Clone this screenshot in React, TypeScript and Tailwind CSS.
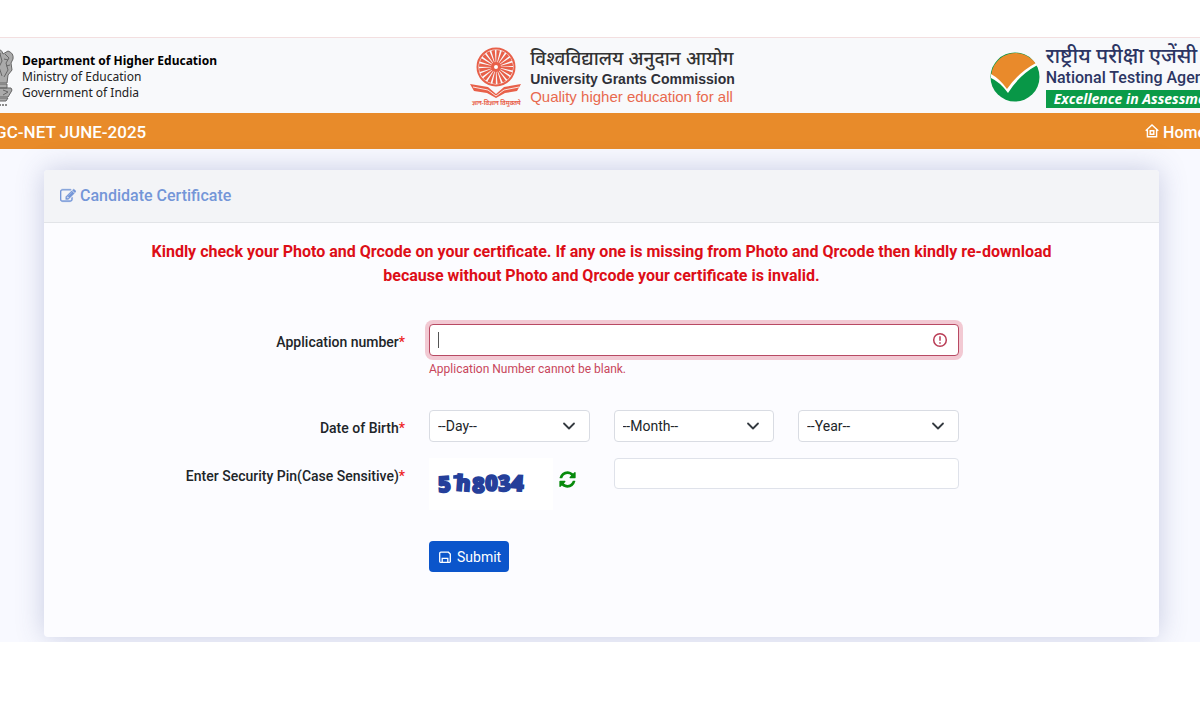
import { useState } from "react";

export default function App() {
  return (
    <div className="min-h-screen overflow-hidden bg-white pt-[37px] font-[Roboto,'Noto_Sans',sans-serif] text-[#212529]">
      <Header />
      <NavBar />
      <main className="bg-[#f8f9ff] pt-[21px] pr-[41px] pb-[5px] pl-11">
        <section className="rounded bg-[#fcfcff] shadow-[0_0_28px_rgba(60,70,140,0.25)]">
          <h1 className="flex items-center gap-1 rounded-t border-b border-[#e2e4e8] bg-[#f3f4f7] px-4 py-[14px] text-base font-medium text-[#7496d8]">
            {editIcon}
            Candidate Certificate
          </h1>
          <CertificateForm />
        </section>
      </main>
      <footer className="relative h-20 bg-white" />
    </div>
  );
}

function Header() {
  return (
    <header className="flex h-[76px] items-center justify-between border-t border-[#f3dfe0] bg-[#f8f9fb] pt-0.5 whitespace-nowrap">
      <div className="-ml-6 flex flex-1 items-center gap-2">
        {emblem}
        <div className="font-['Noto_Sans',sans-serif] text-xs leading-4 text-[#222]">
          <p className="font-bold text-black">Department of Higher Education</p>
          <p>Ministry of Education</p>
          <p>Government of India</p>
        </div>
      </div>
      <div className="flex items-center gap-[7px]">
        {ugcLogo}
        <div className="font-['Liberation_Sans','Noto_Sans',sans-serif]">
          <p className="text-[19px] leading-5 font-medium text-[#333]">
            विश्वविद्यालय अनुदान आयोग
          </p>
          <p className="text-sm leading-5 font-bold text-[#2f3038]">
            University Grants Commission
          </p>
          <p className="text-[15px] leading-4 text-[#e8694f]">
            Quality higher education for all
          </p>
        </div>
      </div>
      <div className="-mr-7 flex flex-1 items-center justify-end gap-1">
        {ntaLogo}
        <div className="text-[#2c3563]">
          <p className="text-[21px] leading-5 font-medium">राष्ट्रीय परीक्षा एजेंसी</p>
          <p className="text-base leading-6 font-medium">National Testing Agency</p>
          <p className="bg-[#0b9b48] px-2 font-['Open_Sans',sans-serif] text-sm leading-[18px] font-bold text-white italic">
            Excellence in Assessment
          </p>
        </div>
      </div>
    </header>
  );
}

function NavBar() {
  return (
    <nav className="flex h-9 items-center justify-between bg-[#e88b2a] pt-1 whitespace-nowrap text-white">
      <span className="-ml-4 text-[17px] font-medium">UGC-NET JUNE-2025</span>
      <a href="#home" className="-mr-1.5 flex items-center gap-1 text-base font-medium">
        {homeIcon}
        Home
      </a>
    </nav>
  );
}

function CertificateForm() {
  const [applicationNo, setApplicationNo] = useState("");
  const [pin, setPin] = useState("");

  return (
    <form
      className="px-4 pt-[17px] pb-[65px] text-sm"
      onSubmit={(e) => e.preventDefault()}
    >
      <p className="mx-auto max-w-[940px] text-center text-base leading-6 font-bold text-[#dd0e17]">
        Kindly check your Photo and Qrcode on your certificate. If any one is
        missing from Photo and Qrcode then kindly re-download because without
        Photo and Qrcode your certificate is invalid.
      </p>

      <div className="mt-9 grid grid-cols-6 gap-x-6">
        <label htmlFor="application" className={labelStyle}>
          Application number<Required />
        </label>
        <div className="col-span-3">
          <div className="relative">
            <input
              id="application"
              value={applicationNo}
              onChange={(e) => setApplicationNo(e.target.value)}
              aria-invalid="true"
              aria-describedby="application-error"
              className="block h-8 w-full rounded border border-[#b84a63] bg-white px-2 ring-4 ring-[#f2c9d3] outline-none"
            />
            {applicationNo === "" && (
              <span className="pointer-events-none absolute top-2 left-[9px] h-4 w-px bg-[#555]" />
            )}
            <span className="absolute top-2 right-[11px]">{alertIcon}</span>
          </div>
          <p
            id="application-error"
            className="mt-1 text-xs leading-[18px] text-[#c8465b]"
          >
            Application Number cannot be blank.
          </p>
        </div>
      </div>

      <div className="mt-8 grid grid-cols-6 gap-x-6">
        <label htmlFor="Day" className={labelStyle}>
          Date of Birth<Required />
        </label>
        {dateFields.map(({ name, options }) => (
          <div key={name} className="relative">
            <select
              id={name}
              aria-label={name}
              className="h-8 w-full appearance-none rounded border border-[#d9dce3] bg-white px-2"
            >
              <option>--{name}--</option>
              {options.map((option) => (
                <option key={option}>{option}</option>
              ))}
            </select>
            <span className="pointer-events-none absolute top-[9px] right-[14px]">
              {chevronIcon}
            </span>
          </div>
        ))}
      </div>

      <div className="mt-4 grid grid-cols-6 gap-x-6">
        <label htmlFor="pin" className={labelStyle}>
          Enter Security Pin(Case Sensitive)<Required />
        </label>
        <div className="flex items-start gap-[5px]">
          {captcha}
          <button type="button" aria-label="Refresh" className="mt-3">
            {refreshIcon}
          </button>
        </div>
        <input
          id="pin"
          value={pin}
          onChange={(e) => setPin(e.target.value)}
          className="col-span-2 h-[31px] rounded border border-[#dfe2ea] bg-white px-2"
        />
      </div>

      <div className="mt-[31px] grid grid-cols-6 gap-x-6">
        <button
          type="submit"
          className="col-start-3 flex h-[31px] items-center gap-1 justify-self-start rounded bg-[#0b55cb] px-2 text-sm text-white"
        >
          {saveIcon}
          Submit
        </button>
      </div>
    </form>
  );
}

function Required() {
  return <span className="text-[#ee1c25]">*</span>;
}

const labelStyle =
  "col-span-2 pt-2 text-right text-sm leading-5 font-medium text-[#212529]";

const dateFields = [
  {
    name: "Day",
    options: Array.from({ length: 31 }, (_, i) => String(i + 1)),
  },
  {
    name: "Month",
    options: Array.from({ length: 12 }, (_, i) => String(i + 1)),
  },
  {
    name: "Year",
    options: Array.from({ length: 60 }, (_, i) => String(2007 - i)),
  },
];

const editIcon = (
  <svg viewBox="0 0 1792 1792" className="size-4" fill="currentColor" stroke="currentColor" strokeWidth="40">
    <path d="M888 1184l116-116-152-152-116 116v56h96v96h56zm440-720q-16-16-33 1l-350 350q-17 17-1 33t33-1l350-350q17-17 1-33zm80 594v190q0 119-84.5 203.5t-203.5 84.5h-832q-119 0-203.5-84.5t-84.5-203.5v-832q0-119 84.5-203.5t203.5-84.5h832q63 0 117 25 15 7 18 23 3 17-9 29l-49 49q-14 14-32 8-23-6-45-6h-832q-66 0-113 47t-47 113v832q0 66 47 113t113 47h832q66 0 113-47t47-113v-126q0-13 9-22l64-64q15-15 35-7t20 29zm-96-738l288 288-672 672h-288v-288zm444 132l-92 92-288-288 92-92q28-28 68-28t68 28l152 152q28 28 28 68t-28 68z" />
  </svg>
);

const refreshIcon = (
  <svg viewBox="0 0 1792 1792" className="size-[19px] text-[#078a0c]" fill="currentColor">
    <path d="M1639 1056q0 5-1 7-64 268-268 434.5t-478 166.5q-146 0-282.5-55t-243.5-157l-129 129q-19 19-45 19t-45-19-19-45v-448q0-26 19-45t45-19h448q26 0 45 19t19 45-19 45l-137 137q71 66 161 102t187 36q134 0 250-65t186-179q11-17 53-117 8-23 30-23h192q13 0 22.5 9.5t9.5 22.5zm25-800v448q0 26-19 45t-45 19h-448q-26 0-45-19t-19-45 19-45l138-138q-148-137-349-137-134 0-250 65t-186 179q-11 17-53 117-8 23-30 23h-199q-13 0-22.5-9.5t-9.5-22.5v-7q65-268 270-434.5t480-166.5q146 0 284 55.5t245 156.5l130-129q19-19 45-19t45 19 19 45z" />
  </svg>
);

const homeIcon = (
  <svg viewBox="0 0 14 14" className="mb-1 size-[14px]" fill="none" stroke="currentColor" strokeWidth="1.4">
    <path d="M.7 6.8 7 1l6.3 5.8M2.4 5.8v7h9.2v-7" />
    <path d="M5.2 6.7h3.6v3.5H5.2z" />
  </svg>
);

const saveIcon = (
  <svg viewBox="0 0 16 16" className="size-4" fill="none" stroke="currentColor" strokeWidth="1.3">
    <path d="M4 3.2h7.4l1.9 1.9v7.4a.8.8 0 0 1-.8.8h-9a.8.8 0 0 1-.8-.8V4.4A1.2 1.2 0 0 1 4 3.2Z" />
    <path d="M5.2 13V9.3h5.6V13" />
  </svg>
);

const alertIcon = (
  <svg viewBox="0 0 16 16" className="size-4" fill="none" stroke="#b93c55" strokeWidth="1.5">
    <circle cx="8" cy="8" r="6.3" />
    <path d="M8 4.2v4.6M8 10.2v1.6" />
  </svg>
);

const chevronIcon = (
  <svg viewBox="0 0 14 14" className="size-[14px]" fill="none" stroke="#343a40" strokeWidth="1.8" strokeLinecap="round" strokeLinejoin="round">
    <path d="m2 4.5 5 5 5-5" />
  </svg>
);

const captcha = (
  <svg viewBox="0 0 124 52" role="img" aria-label="Security pin" className="h-[52px] w-[124px] shrink-0 bg-white">
    <g fill="#253f9a" stroke="#253f9a" strokeWidth="1.6" fontFamily="Open Sans" fontWeight="800" fontSize="22">
      <text x="9" y="34" transform="rotate(-4 16 26)">5</text>
      <text x="27" y="33" transform="rotate(4 33 25)">h</text>
      <text x="43" y="35">8</text>
      <text x="56" y="33">0</text>
      <text x="69" y="33" transform="rotate(-4 75 26)">3</text>
      <text x="82" y="33" transform="rotate(4 88 26)">4</text>
      <path d="m25 18 6-1v3h-6Z" />
    </g>
  </svg>
);

const emblem = (
  <svg viewBox="0 0 38 60" className="h-[60px] w-[38px] shrink-0" fill="#aaa" stroke="#666" strokeWidth="1">
    <path d="M12 8q0-6 7-7 7 1 8 6l5-3q6 2 5 8l-2 4 1 7-4 5-1 8H9L4 24V11l5-5Z" />
    <path d="m17 8 3 4-2 7 3 8M24 7l2 7-3 6 3 9M29 7l4 4-3 5 2 7-4 7M28 12l4 1M20 5l5 2M30 19l4-1M13 12l-2 7 3 10" fill="none" />
    <path d="M9 37h22v4H9ZM4 41h31q2 2 0 4l-3 5H6l-4-5Z" />
    <circle cx="19" cy="46" r="4" fill="#ddd" />
    <path d="M19 42v8M15 46h8M27 43l5 2-5 3M12 51h20l-2 3H9Z" />
    <path d="M8 58h24" strokeDasharray="2 1" strokeWidth="1.5" />
  </svg>
);

const ugcLogo = (
  <svg viewBox="0 0 54 62" className="h-[62px] w-[54px] shrink-0" fill="none" stroke="#e86049">
    <circle cx="27" cy="21" r="18.5" strokeWidth="2" />
    <circle cx="27" cy="21" r="10.5" strokeWidth="13" strokeDasharray="2.2 1.1" />
    <circle cx="27" cy="21" r="3.5" strokeWidth="3" fill="#fff" />
    <path d="m1 38 18 3 8 7 8-7 17-3-4 7-12 2-9 5-9-5-13-2Z" fill="#e86049" stroke="none" />
    <path d="m4 41 15 3 8 6 8-6 15-3" stroke="#fbe4de" strokeWidth="1" />
    <text x="3" y="59" fill="#e86049" stroke="none" fontFamily="Noto Sans, sans-serif" fontWeight="bold" fontSize="6">
      ज्ञान-विज्ञान विमुक्तये
    </text>
  </svg>
);

const ntaLogo = (
  <svg viewBox="0 0 52 50" className="h-[50px] w-[52px] shrink-0">
    <circle cx="25" cy="25" r="24.5" fill="#089747" />
    <path d="M1.2 23A24.5 24.5 0 0 1 46 12Q29 22 17 38Q11 30 1.2 23Z" fill="#e98a2b" />
    <path d="M1 22q9 5 16 15Q29 20 46 11l1.5 2Q29 23 18 41q-8-11-17-15Z" fill="#fff" />
  </svg>
);
